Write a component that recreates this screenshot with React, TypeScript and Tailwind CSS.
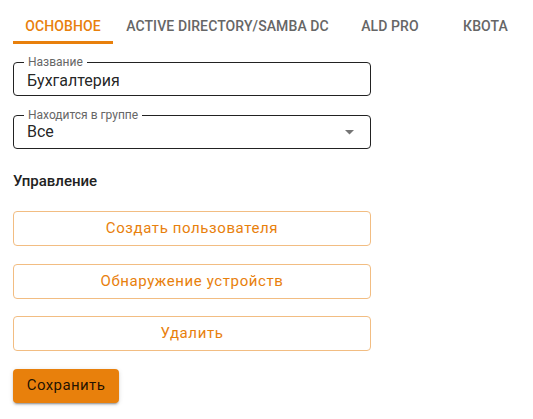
import { useState } from "react";

const TABS = [
  { id: "main", label: "Основное", w: "w-[100px]" },
  { id: "ad", label: "Active Directory/Samba DC", w: "w-[229px]" },
  { id: "ald", label: "ALD Pro", w: "w-[96px]" },
  { id: "quota", label: "Квота", w: "w-[95px]" },
];

const ACTIONS = ["Создать пользователя", "Обнаружение устройств", "Удалить"];

export default function App() {
  const [tab, setTab] = useState("main");
  const [name, setName] = useState("Бухгалтерия");

  return (
    <div className="w-[533px] h-[419px] bg-white font-['Roboto',sans-serif] text-[rgba(0,0,0,0.87)]">
      {/* Tabs */}
      <div className="flex pl-[13px]">
        {TABS.map((t) => (
          <button
            key={t.id}
            onClick={() => setTab(t.id)}
            className={`${t.w} h-[44px] pt-[12px] flex items-center justify-center border-b-[3px] text-[14px] font-medium uppercase tracking-[0.1px] whitespace-nowrap ${
              tab === t.id ? "border-[#e8800c] text-[#e8800c]" : "border-transparent text-[#666]"
            }`}
          >
            {t.label}
          </button>
        ))}
      </div>

      <div className="pl-[13px] w-[371px]">
        {/* Name field */}
        <div className="relative mt-[18px] h-[34px] border border-[#222] rounded-[4px] flex items-center px-[13px] pt-[3px]">
          <span className="absolute left-[10px] -top-[8px] bg-white px-[4px] text-[12px] leading-[14px] text-[#666]">
            Название
          </span>
          <input
            value={name}
            onChange={(e) => setName(e.target.value)}
            className="w-full outline-none text-[16px] bg-transparent"
          />
        </div>

        {/* Group select */}
        <div className="relative mt-[19px] h-[34px] border border-[#222] rounded-[4px] flex items-center px-[13px]">
          <span className="absolute left-[10px] -top-[8px] bg-white px-[4px] text-[12px] leading-[14px] text-[#666]">
            Находится в группе
          </span>
          <span className="flex-1 text-[16px]">Все</span>
          <svg width="9" height="5" viewBox="0 0 9 5" className="mr-[3px]">
            <path d="M0 0h9L4.5 4.5z" fill="#757575" />
          </svg>
        </div>

        <div className="mt-[20px] h-[24px] leading-[24px] text-[15px] font-medium text-[#222]">Управление</div>

        <div className="mt-[18px] flex flex-col gap-[17.5px]">
          {ACTIONS.map((a) => (
            <button
              key={a}
              className="h-[35px] border border-[#f2bd82] rounded-[4px] text-[15px] tracking-[0.6px] text-[#e8800c]"
            >
              {a}
            </button>
          ))}
        </div>

        <button className="mt-[17.5px] w-[106px] h-[34px] rounded-[4px] bg-[#e8800c] text-[15px] tracking-[0.4px] text-[rgba(0,0,0,0.87)] shadow-[0_3px_1px_-2px_rgba(0,0,0,0.2),0_2px_2px_0_rgba(0,0,0,0.14),0_1px_5px_0_rgba(0,0,0,0.12)]">
          Сохранить
        </button>
      </div>
    </div>
  );
}
